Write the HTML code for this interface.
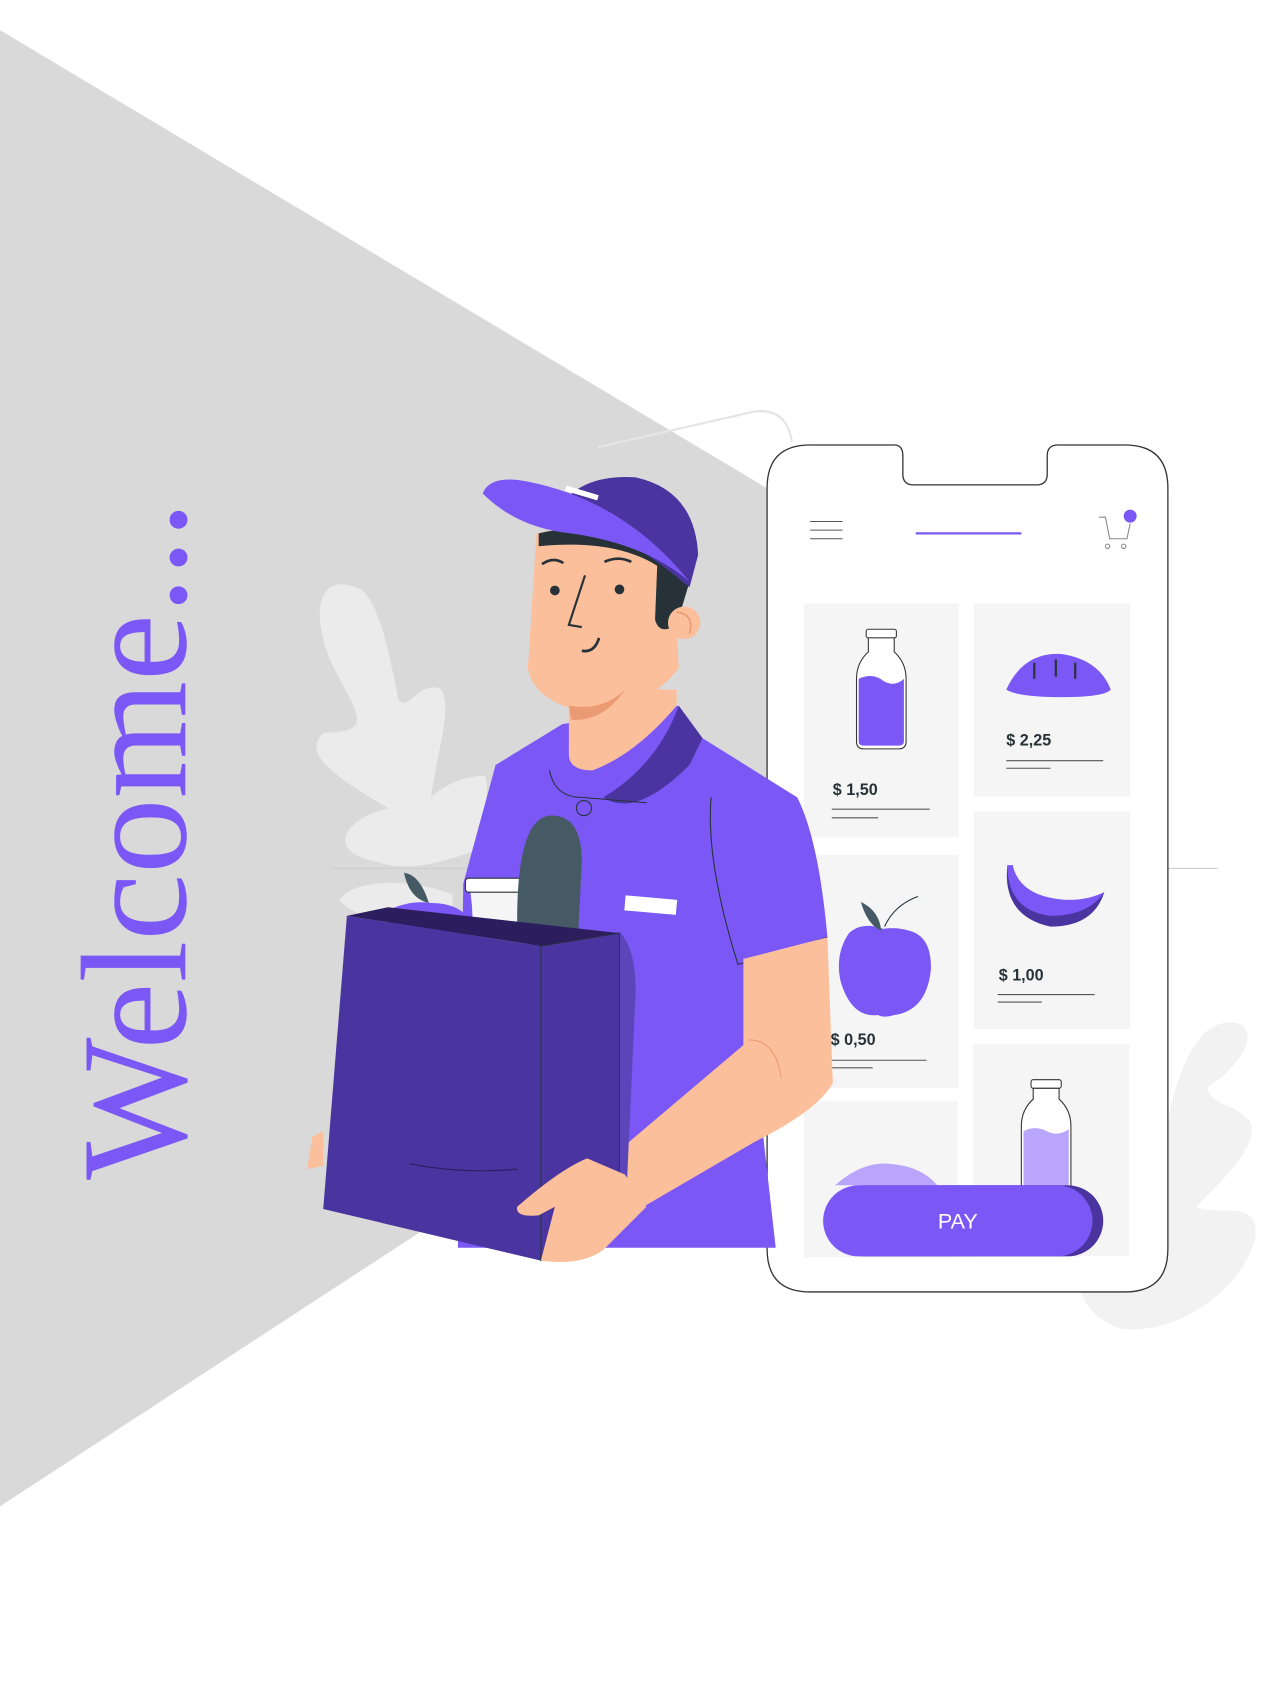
<!DOCTYPE html>
<html><head><meta charset="utf-8"><style>
html,body{margin:0;padding:0;background:#fff;}
svg{display:block;}
</style></head><body>
<svg width="1267" height="1696" viewBox="0 0 1176 1574" preserveAspectRatio="none" xmlns="http://www.w3.org/2000/svg">
<rect width="1176" height="1574" fill="#fff"/>
<polygon points="0,28 1060,661 1060,706 0,1398" fill="#d9d9d9"/>
<text transform="translate(172,1095) rotate(-90)" font-family="Liberation Serif, serif" font-size="140" fill="#7b58f5">Welcome...</text>
<!-- background leaves -->
<path d="M330,545 C290,530 290,580 310,620 C330,660 350,680 300,680 C280,700 310,720 360,750 C320,760 300,790 350,800 C380,810 410,800 440,790 C450,760 455,730 450,720 C420,720 400,740 400,740 C405,700 420,660 410,640 C390,630 380,660 370,650 C360,600 350,550 330,545Z" fill="#ebebeb"/>
<path d="M315,835 C330,815 380,815 420,830 L420,855 C380,860 330,855 315,835Z" fill="#ebebeb"/>
<path d="M1150,950 C1110,940 1090,1000 1080,1060 C1060,1090 1030,1110 1010,1140 C990,1180 1000,1220 1040,1233 C1090,1240 1150,1200 1165,1150 C1170,1110 1130,1130 1110,1120 C1140,1090 1170,1060 1160,1040 C1140,1020 1130,1030 1120,1010 C1150,990 1170,960 1150,950Z" fill="#f2f2f2"/>
<line x1="308" y1="806" x2="1130" y2="806" stroke="#cfcfcf" stroke-width="1"/>
<path d="M555,415 L700,382 Q730,378 735,410" fill="none" stroke="#e5e5e5" stroke-width="2"/>
<!-- phone -->
<path d="M755,413 L830,413 Q838,413 838,423 L838,440 Q838,450 848,450 L962,450 Q972,450 972,440 L972,423 Q972,413 982,413 L1044,413 Q1084,413 1084,453 L1084,1159 Q1084,1199 1044,1199 L752,1199 Q712,1199 712,1159 L712,453 Q712,413 752,413Z" fill="#fff" stroke="#333" stroke-width="1.2"/>
<g stroke="#555" stroke-width="1"><line x1="752" y1="484" x2="782" y2="484"/><line x1="752" y1="492" x2="782" y2="492"/><line x1="752" y1="500" x2="782" y2="500"/></g>
<line x1="850" y1="495" x2="948" y2="495" stroke="#7b58f5" stroke-width="2"/>
<path d="M1020,480 l6,0 l4,20 l16,0 l3,-14" fill="none" stroke="#888" stroke-width="1"/>
<circle cx="1028" cy="507" r="2" fill="none" stroke="#888"/><circle cx="1043" cy="507" r="2" fill="none" stroke="#888"/>
<circle cx="1049" cy="479" r="6" fill="#7b58f5"/>
<g fill="#f5f5f5">
<rect x="746" y="560" width="144" height="217"/>
<rect x="904" y="560" width="145" height="179"/>
<rect x="904" y="753" width="145" height="202"/>
<rect x="746" y="793" width="144" height="217"/>
<rect x="746" y="1022" width="143" height="145"/>
<rect x="903" y="969" width="145" height="197"/>
</g>
<rect x="804" y="584" width="28" height="8" rx="2" fill="#fff" stroke="#333"/>
<path d="M806,592 L806,605 Q795,615 795,630 L795,688 Q795,695 802,695 L834,695 Q841,695 841,688 L841,630 Q841,615 830,605 L830,592Z" fill="#fff" stroke="#333"/>
<path d="M797,630 Q810,624 820,632 Q830,638 839,630 L839,688 Q839,692 834,692 L802,692 Q797,692 797,688Z" fill="#7b58f5"/>
<g font-family="Liberation Sans, sans-serif" font-size="15" font-weight="bold" fill="#263238">
<text x="773" y="738">$ 1,50</text><text x="934" y="692">$ 2,25</text><text x="927" y="910">$ 1,00</text><text x="771" y="970">$ 0,50</text></g>
<g stroke="#555" stroke-width="1"><line x1="772" y1="751" x2="863" y2="751"/><line x1="772" y1="759" x2="815" y2="759"/>
<line x1="934" y1="706" x2="1024" y2="706"/><line x1="934" y1="713" x2="975" y2="713"/>
<line x1="926" y1="923" x2="1016" y2="923"/><line x1="926" y1="930" x2="967" y2="930"/>
<line x1="772" y1="984" x2="860" y2="984"/><line x1="772" y1="991" x2="810" y2="991"/></g>
<path d="M934,640 Q950,605 985,607 Q1020,612 1031,640 Q1025,647 985,647 Q945,647 934,640Z" fill="#7b58f5"/>
<g stroke="#263238" stroke-width="2"><line x1="960" y1="615" x2="960" y2="630"/><line x1="980" y1="612" x2="980" y2="628"/><line x1="998" y1="615" x2="998" y2="630"/></g>
<path d="M935,803 Q930,850 975,860 Q1015,860 1025,828 Q1000,845 970,838 Q945,830 940,803Z" fill="#4a35a0"/>
<path d="M935,803 Q935,845 975,850 Q1010,850 1025,828 Q1000,840 970,832 Q945,825 940,803Z" fill="#7b58f5"/>
<path d="M820,862 Q800,855 788,866 Q775,885 780,910 Q790,945 815,942 Q820,945 830,942 Q860,938 864,900 Q865,870 845,864 Q832,860 820,862Z" fill="#7b58f5"/>
<path d="M818,864 Q816,845 799,837 Q805,858 818,864Z" fill="#455a64"/>
<path d="M821,860 Q830,840 852,832" fill="none" stroke="#263238"/>
<rect x="957" y="1002" width="28" height="8" rx="2" fill="#fff" stroke="#333"/>
<path d="M959,1010 L959,1020 Q948,1030 948,1045 L948,1110 L994,1110 L994,1045 Q994,1030 983,1020 L983,1010Z" fill="#fff" stroke="#333"/>
<path d="M950,1050 Q960,1044 972,1050 Q982,1055 992,1048 L992,1110 L950,1110Z" fill="#b9a5fb"/>
<path d="M775,1100 Q800,1078 825,1080 Q855,1082 870,1100Z" fill="#b9a5fb"/>
<rect x="770" y="1100" width="254" height="66" rx="33" fill="#4a35a0"/>
<rect x="764" y="1100" width="250" height="66" rx="33" fill="#7b58f5"/>
<text x="889" y="1140" text-anchor="middle" font-family="Liberation Sans, sans-serif" font-size="20" fill="#fff">PAY</text>
<!-- man: shirt -->
<path d="M522,672 L630,655 L652,685 L740,740 Q760,780 768,870 L690,890 L720,1158 L425,1158 L430,820 L460,710Z" fill="#7b58f5"/>
<path d="M660,740 Q655,800 685,895 L768,870" fill="none" stroke="#263238" stroke-width="1"/>
<path d="M630,655 Q610,710 560,740 Q590,760 640,710 L652,685Z" fill="#4a35a0"/>
<path d="M510,715 Q515,740 540,740 L600,745" fill="none" stroke="#263238" stroke-width="1"/>
<circle cx="542" cy="750" r="7" fill="none" stroke="#263238"/>
<rect x="580" y="833" width="48" height="14" fill="#fff" transform="rotate(5 604 840)"/>
<path d="M528,640 L628,640 L628,655 Q590,700 550,715 Q528,715 528,700Z" fill="#fcbf9b"/>
<path d="M498,495 Q560,480 625,520 L630,620 Q600,660 540,660 Q495,650 490,620Z" fill="#fcbf9b"/>
<path d="M528,655 Q560,660 580,640 Q560,670 530,668Z" fill="#eb9b73"/>
<path d="M500,495 Q560,480 625,520 L640,540 L628,580 Q612,590 608,575 L610,525 Q570,500 500,507Z" fill="#263238"/>
<circle cx="635" cy="578" r="15" fill="#fcbf9b"/>
<path d="M628,568 Q645,570 640,588" fill="none" stroke="#eb9b73" stroke-width="1.5"/>
<path d="M520,470 Q540,440 590,443 Q645,455 648,515 L640,545 Q580,495 520,470Z" fill="#4a35a0"/>
<path d="M448,458 Q455,440 490,447 Q580,465 640,540 Q600,505 530,495 Q480,490 448,458Z" fill="#7b58f5"/>
<line x1="525" y1="453" x2="555" y2="462" stroke="#fff" stroke-width="5"/>
<g stroke="#263238" stroke-width="2.5" fill="none" stroke-linecap="round"><path d="M504,523 Q513,517 522,522"/><path d="M562,521 Q574,516 585,521"/></g>
<circle cx="515" cy="548" r="4.5" fill="#263238"/><circle cx="575" cy="547" r="4.5" fill="#263238"/>
<path d="M543,534 L528,580 L540,582" fill="none" stroke="#263238" stroke-width="2"/>
<path d="M540,604 Q552,606 556,592" fill="none" stroke="#263238" stroke-width="2.5"/>
<path d="M690,890 L768,870 L773,1005 Q760,1030 700,1060 L580,1130 L560,1080 L690,970Z" fill="#fcbf9b"/>
<path d="M695,965 Q720,965 725,1000" fill="none" stroke="#eb9b73" stroke-width="1"/>
<path d="M375,810 Q390,812 398,838 Q380,834 375,810Z" fill="#455a64"/>
<path d="M360,845 Q380,835 400,838 Q430,838 440,860 L440,880 L360,880Z" fill="#7b58f5"/>
<path d="M436,822 L438,840 L440,880 L500,882 L490,840 L480,826Z" fill="#f5f5f5"/>
<rect x="432" y="815" width="52" height="13" rx="3" fill="#fff" stroke="#263238"/>
<path d="M480,855 Q480,760 510,757 Q540,755 540,800 L536,880 L495,885Z" fill="#455a64"/>
<path d="M538,870 L575,865 Q590,880 590,920 L580,1140 L502,1170Z" fill="#5b45b8"/>
<path d="M322,850 L360,842 L575,866 L502,878Z" fill="#2c1d5e"/>
<path d="M322,850 L502,878 L502,1170 L300,1122Z" fill="#4a35a0"/>
<path d="M502,878 L575,866 L575,1140 L502,1170Z" fill="#4a35a0" stroke="#263238" stroke-width="0.8"/>
<path d="M380,1080 Q430,1090 480,1085" fill="none" stroke="#2c1d5e"/>
<path d="M290,1055 L300,1050 L300,1082 L285,1085Z" fill="#fcbf9b"/>
<path d="M580,1090 L545,1075 Q520,1085 480,1120 Q478,1130 500,1128 L515,1120 L502,1170 Q540,1175 560,1160 L600,1120Z" fill="#fcbf9b"/>
</svg>
</body></html>
